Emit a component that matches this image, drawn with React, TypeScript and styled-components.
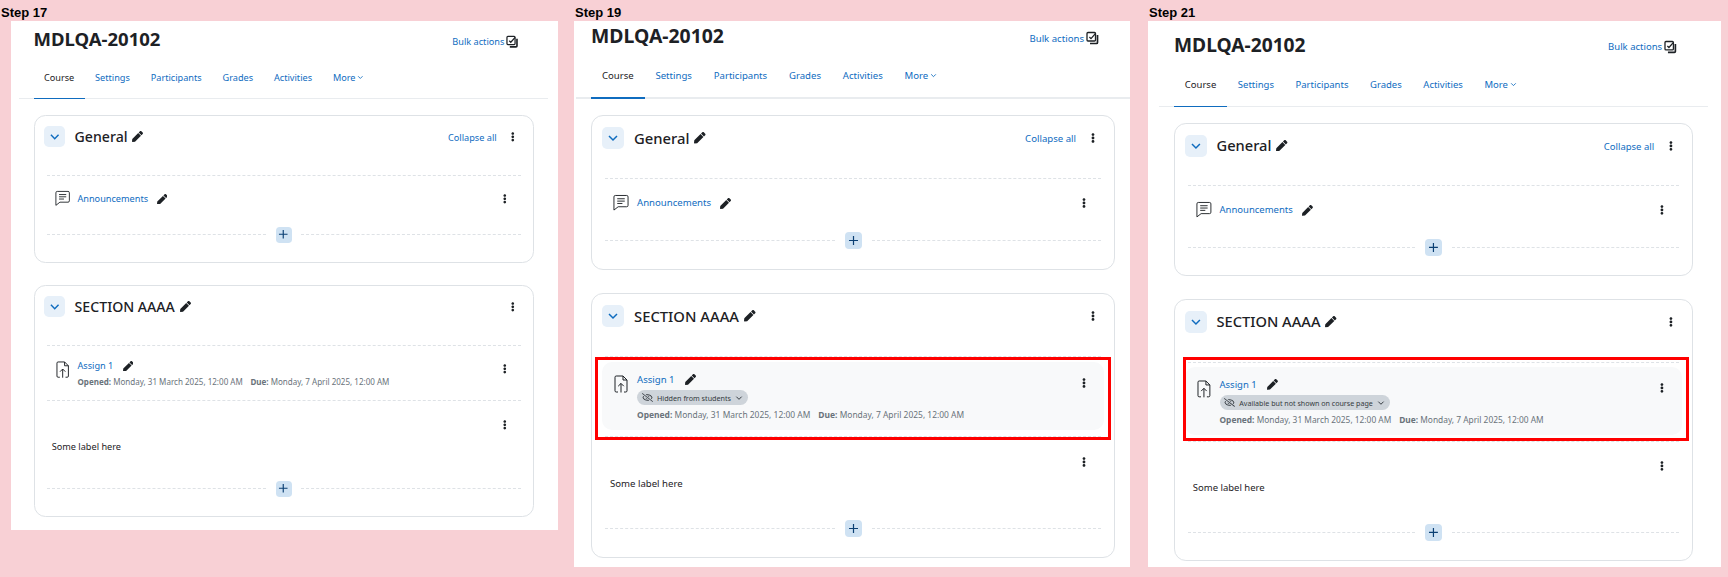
import React, { FC } from 'react';
import styled, { createGlobalStyle } from 'styled-components';
import { FaEllipsisV, FaPen, FaRegEyeSlash } from 'react-icons/fa';

const GlobalStyle = createGlobalStyle`
    html, body {
        margin: 0;
        padding: 0;
        background: #f8d0d5;
    }
    * {
        box-sizing: border-box;
    }
`;

const Page = styled.div`
    display: flex;
    align-items: flex-start;
    width: 1728px;
    height: 577px;
    overflow: hidden;
    background: #f8d0d5;
    font-family: "Noto Sans", "Open Sans", sans-serif;
`;

const StepColumn = styled.div<{ $left: number }>`
    margin-left: ${(p) => p.$left}px;
`;

const StepLabel = styled.div<{ $indent: number }>`
    height: 21px;
    padding-top: 5px;
    margin-left: ${(p) => p.$indent}px;
    font: bold 13px/16px "Liberation Sans", Arial, sans-serif;
    color: #000;
`;

const Panel = styled.div<{ $width: number; $height: number; $padLeft: number; $padTop: number }>`
    width: ${(p) => p.$width}px;
    height: ${(p) => p.$height}px;
    padding: ${(p) => p.$padTop}px 0 0 ${(p) => p.$padLeft}px;
    background: #fff;
    overflow: hidden;
`;

const Course = styled.div<{ $zoom: number }>`
    width: 524px;
    zoom: ${(p) => p.$zoom};
`;

const PageHeader = styled.div`
    display: flex;
    align-items: center;
    justify-content: space-between;
    height: 30px;
    padding-right: 16px;
    margin-bottom: 3.5px;
`;

const Title = styled.h1`
    margin: 0;
    font-size: 19.4px;
    line-height: 30px;
    font-weight: 700;
    color: #1d2125;
`;

const BulkActions = styled.a`
    display: flex;
    align-items: center;
    gap: 2px;
    margin-top: 4px;
    font-size: 9.6px;
    color: #0f6cbf;
`;

const TabBar = styled.nav`
    display: flex;
    height: 44px;
    margin: 0 -15px;
    padding-left: 15px;
    border-bottom: 2px solid #e9ecef;
`;

const Tab = styled.a<{ $active?: boolean }>`
    display: flex;
    align-items: center;
    gap: 2px;
    height: 44px;
    padding: 0 10.9px 0;
    border-bottom: 2px solid ${(p) => (p.$active ? '#0f6cbf' : 'transparent')};
    font-size: 9.6px;
    color: ${(p) => (p.$active ? '#1d2125' : '#0f6cbf')};
`;

const Card = styled.section`
    margin-top: 16.5px;
    padding: 11px 13px 20px;
    border: 1px solid #dee2e6;
    border-radius: 12px;

    & + & {
        margin-top: 23px;
    }
`;

const SectionHeader = styled.div`
    display: flex;
    align-items: center;
    height: 22px;
    margin: 0 -3px 29px;
    padding-right: 5px;
`;

const Toggle = styled.button`
    display: flex;
    align-items: center;
    justify-content: center;
    width: 22px;
    height: 22px;
    margin-right: 10px;
    padding: 0;
    border: none;
    border-radius: 5px;
    background: #e7f0f9;
    color: #0f6cbf;
`;

const SectionTitle = styled.h3`
    margin: 0 5px 0 0;
    font-size: 14.8px;
    line-height: 22px;
    font-weight: 500;
    color: #1d2125;
`;

const Pencil = styled(FaPen)<{ $gap?: number }>`
    flex: none;
    margin-left: ${(p) => p.$gap || 0}px;
    color: #1d2125;
`;

const CollapseAll = styled.a`
    margin: 1px 11px 0 auto;
    font-size: 9.6px;
    color: #0f6cbf;
`;

const Dots = styled.span<{ $pushed?: boolean; $top?: number }>`
    display: flex;
    align-items: center;
    justify-content: center;
    flex: none;
    width: 12px;
    height: 14px;
    margin-left: ${(p) => (p.$pushed ? 'auto' : '0')};
    margin-top: ${(p) => p.$top || 0}px;
    color: #1d2125;
`;

const ActivityItem = styled.div`
    position: relative;
    padding: 5px 0 6px;
    border-top: 1px dashed #dee2e6;
`;

const ActivityBox = styled.div<{ $highlight?: boolean; $single?: boolean }>`
    display: flex;
    align-items: ${(p) => (p.$single ? 'center' : 'flex-start')};
    min-height: ${(p) => (p.$single ? 38 : 46)}px;
    margin: 0 -3px;
    padding: ${(p) => (p.$single ? '0' : p.$highlight ? '9.5px 0 9px' : '8px 0')};
    padding-left: 11px;
    padding-right: 14px;
    border-radius: 10px;
    background: ${(p) => (p.$highlight ? '#f8f9fa' : 'transparent')};
`;

const ActivityIcon = styled.span<{ $single?: boolean }>`
    display: flex;
    justify-content: center;
    flex: none;
    width: 16px;
    height: 18px;
    margin-top: ${(p) => (p.$single ? 0 : 3)}px;
    margin-right: 8px;
    color: #1d2125;
`;

const ActivityText = styled.div`
    flex: 1;
    min-width: 0;
`;

const NameRow = styled.div`
    display: flex;
    align-items: center;
    height: 16px;
`;

const ActivityLink = styled.a`
    font-size: 9.6px;
    line-height: 16px;
    color: #0f6cbf;
`;

const Availability = styled.span`
    display: flex;
    align-items: center;
    gap: 4px;
    width: fit-content;
    height: 15px;
    margin: 2.5px 0 4px;
    padding: 0 5px 0 5px;
    border-radius: 8px;
    background: #ced4da;
    font-size: 7.2px;
    color: #343a40;
`;

const Dates = styled.div<{ $tight?: boolean }>`
    display: flex;
    gap: 8px;
    margin-top: ${(p) => (p.$tight ? 2 : 0)}px;
    font-size: 8.45px;
    line-height: 12px;
    color: #6a737b;

    b {
        font-weight: 700;
    }
`;

const HighlightFrame = styled.div<{ $top: number; $left: number; $right: number; $bottom: number }>`
    position: absolute;
    top: ${(p) => p.$top}px;
    left: ${(p) => p.$left}px;
    right: ${(p) => p.$right}px;
    bottom: ${(p) => p.$bottom}px;
    border: 3.1px solid #f00;
    pointer-events: none;
`;

const LabelItem = styled.div`
    display: flex;
    flex-direction: column;
    height: 80px;
    padding: 18px 11px 0 5px;
    border-top: 1px dashed #dee2e6;
`;

const LabelText = styled.p`
    margin: 7px 0 0;
    font-size: 9.6px;
    line-height: 16px;
    color: #1d2125;
`;

const AddRow = styled.div`
    display: flex;
    align-items: center;
    height: 17px;
    margin-top: 4px;
`;

const AddLine = styled.span`
    flex: 1;
    border-top: 1px dashed #dee2e6;
`;

const AddButton = styled.button`
    display: flex;
    align-items: center;
    justify-content: center;
    width: 17px;
    height: 17px;
    margin: 0 10px;
    padding: 0;
    border: none;
    border-radius: 4px;
    background: #cfe2f3;
    color: #0a3f73;
`;

const Chevron: FC<{ size: number; width?: number }> = ({ size, width = 1.5 }) => (
    <svg width={size} height={size} viewBox="0 0 12 12" fill="none" stroke="currentColor" strokeWidth={width}>
        <path d="M2 4l4 4 4-4" />
    </svg>
);

const BulkIcon = () => (
    <svg width="13" height="14" viewBox="0 0 13 14" fill="none" stroke="#1d2125" strokeWidth="1.3">
        <rect x="1" y="1.5" width="8.5" height="8.5" rx="1" />
        <path d="M11.5 4v7.5a1 1 0 0 1-1 1H4" strokeWidth="1.7" />
        <path d="M3.4 6l1.6 1.6L9.6 2.4" />
    </svg>
);

const ForumIcon = () => (
    <svg width="17" height="18" viewBox="0 0 17 18" fill="none" stroke="#1d2125" strokeWidth="1">
        <path d="M2.5 1h12a1.5 1.5 0 0 1 1.5 1.5v9a1.5 1.5 0 0 1-1.5 1.5H5.5L1 16.5V2.5A1.5 1.5 0 0 1 2.5 1z" />
        <path d="M4.5 4.5h8M4.5 7h8M4.5 9.5h5.5" />
    </svg>
);

const AssignIcon = () => (
    <svg width="14" height="18" viewBox="0 0 14 18" fill="none" stroke="#1d2125" strokeWidth="1">
        <path d="M4 17H2.2A1.2 1.2 0 0 1 1 15.8V2.2A1.2 1.2 0 0 1 2.2 1H9l4 4v10.8a1.2 1.2 0 0 1-1.2 1.2H10" />
        <path d="M9 1v4h4" />
        <path d="M7 17.5V8.5M4.2 11.2L7 8.4l2.8 2.8" />
    </svg>
);

const Plus = () => (
    <svg width="11" height="11" viewBox="0 0 11 11" fill="none" stroke="currentColor" strokeWidth="1.2">
        <path d="M5.5 1v9M1 5.5h9" />
    </svg>
);

const More: FC<{ top?: number; pushed?: boolean }> = ({ top, pushed }) => (
    <Dots $top={top} $pushed={pushed}>
        <FaEllipsisV size={10} />
    </Dots>
);

const AddActivity = () => (
    <AddRow>
        <AddLine />
        <AddButton aria-label="Add content">
            <Plus />
        </AddButton>
        <AddLine />
    </AddRow>
);

interface Frame {
    top: number;
    left: number;
    right: number;
    bottom: number;
}

interface Step {
    name: string;
    left: number;
    indent: number;
    width: number;
    height: number;
    padLeft: number;
    padTop: number;
    zoom: number;
    chip?: string;
    frame?: Frame;
}

const steps: Step[] = [
    { name: 'Step 17', left: 11, indent: -10, width: 547, height: 509, padLeft: 22.5, padTop: 4, zoom: 0.955 },
    {
        name: 'Step 19', left: 16, indent: 1, width: 556, height: 546, padLeft: 17, padTop: 0, zoom: 1,
        chip: 'Hidden from students',
        frame: { top: 0, left: -10, right: -10, bottom: -4 },
    },
    {
        name: 'Step 21', left: 18, indent: 1, width: 573, height: 546, padLeft: 26, padTop: 9, zoom: 0.99,
        chip: 'Available but not shown on course page',
        frame: { top: -6, left: -5, right: -10, bottom: 0 },
    },
];

const tabs = ['Settings', 'Participants', 'Grades', 'Activities'];

const StepPanel: FC<{ step: Step }> = ({ step }) => (
    <StepColumn $left={step.left}>
        <StepLabel $indent={step.indent}>{step.name}</StepLabel>
        <Panel $width={step.width} $height={step.height} $padLeft={step.padLeft} $padTop={step.padTop}>
            <Course $zoom={step.zoom}>
                <PageHeader>
                    <Title>MDLQA-20102</Title>
                    <BulkActions>
                        Bulk actions
                        <BulkIcon />
                    </BulkActions>
                </PageHeader>

                <TabBar>
                    <Tab $active>Course</Tab>
                    {tabs.map((tab) => (
                        <Tab key={tab}>{tab}</Tab>
                    ))}
                    <Tab>
                        More
                        <Chevron size={7} />
                    </Tab>
                </TabBar>

                <Card>
                    <SectionHeader>
                        <Toggle aria-label="Collapse">
                            <Chevron size={12} />
                        </Toggle>
                        <SectionTitle>General</SectionTitle>
                        <Pencil size={11.5} />
                        <CollapseAll>Collapse all</CollapseAll>
                        <More />
                    </SectionHeader>

                    <ActivityItem>
                        <ActivityBox $single>
                            <ActivityIcon $single>
                                <ForumIcon />
                            </ActivityIcon>
                            <ActivityText>
                                <NameRow>
                                    <ActivityLink>Announcements</ActivityLink>
                                    <Pencil size={11} $gap={9} />
                                </NameRow>
                            </ActivityText>
                            <More />
                        </ActivityBox>
                    </ActivityItem>
                    <AddActivity />
                </Card>

                <Card>
                    <SectionHeader>
                        <Toggle aria-label="Collapse">
                            <Chevron size={12} />
                        </Toggle>
                        <SectionTitle>SECTION AAAA</SectionTitle>
                        <Pencil size={11.5} />
                        <More pushed />
                    </SectionHeader>

                    <ActivityItem>
                        <ActivityBox $highlight={!!step.chip}>
                            <ActivityIcon>
                                <AssignIcon />
                            </ActivityIcon>
                            <ActivityText>
                                <NameRow>
                                    <ActivityLink>Assign 1</ActivityLink>
                                    <Pencil size={11} $gap={10} />
                                </NameRow>
                                {step.chip && (
                                    <Availability>
                                        <FaRegEyeSlash size={11} />
                                        {step.chip}
                                        <Chevron size={8} />
                                    </Availability>
                                )}
                                <Dates $tight={!step.chip}>
                                    <span><b>Opened:</b> Monday, 31 March 2025, 12:00 AM</span>
                                    <span><b>Due:</b> Monday, 7 April 2025, 12:00 AM</span>
                                </Dates>
                            </ActivityText>
                            <More top={4} />
                        </ActivityBox>
                        {step.frame && (
                            <HighlightFrame
                                $top={step.frame.top}
                                $left={step.frame.left}
                                $right={step.frame.right}
                                $bottom={step.frame.bottom}
                            />
                        )}
                    </ActivityItem>

                    <LabelItem>
                        <More pushed />
                        <LabelText>Some label here</LabelText>
                    </LabelItem>
                    <AddActivity />
                </Card>
            </Course>
        </Panel>
    </StepColumn>
);

export default function App() {
    return (
        <Page>
            <GlobalStyle />
            {steps.map((step) => (
                <StepPanel key={step.name} step={step} />
            ))}
        </Page>
    );
}
